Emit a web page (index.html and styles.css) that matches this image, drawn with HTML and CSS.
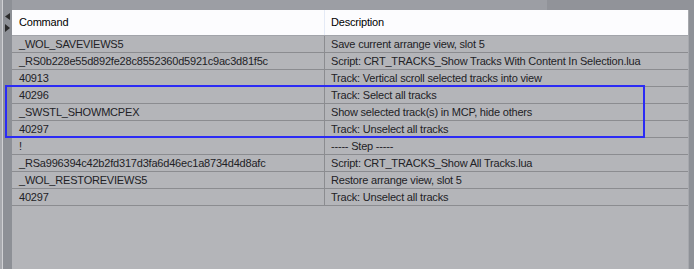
FILE: index.html
```html
<!DOCTYPE html>
<html lang="en">

<head>
    <meta charset="UTF-8">
    <title>Action List</title>
    <link rel="stylesheet" href="styles.css">
</head>

<body>
    <div id="window">
        <div class="side">
            <svg class="arrows" width="12" height="40" viewBox="0 0 12 40">
                <polygon points="10,13 10,20 5,16.5" fill="#2b2b2b" />
                <polygon points="5,24 5,32 10,28" fill="#2b2b2b" />
            </svg>
        </div>

        <div class="main">
            <div class="topbar">
                <div class="topbar-left"></div>
                <div class="topbar-right"></div>
            </div>

            <div class="content">
                <div class="list">
                    <div class="row head">
                        <div class="cell cmd">Command</div>
                        <div class="cell desc">Description</div>
                    </div>
                    <div class="row">
                        <div class="cell cmd">_WOL_SAVEVIEWS5</div>
                        <div class="cell desc">Save current arrange view, slot 5</div>
                    </div>
                    <div class="row">
                        <div class="cell cmd">_RS0b228e55d892fe28c8552360d5921c9ac3d81f5c</div>
                        <div class="cell desc">Script: CRT_TRACKS_Show Tracks With Content In Selection.lua</div>
                    </div>
                    <div class="row">
                        <div class="cell cmd">40913</div>
                        <div class="cell desc">Track: Vertical scroll selected tracks into view</div>
                    </div>
                    <div class="row">
                        <div class="cell cmd">40296</div>
                        <div class="cell desc">Track: Select all tracks</div>
                    </div>
                    <div class="row">
                        <div class="cell cmd">_SWSTL_SHOWMCPEX</div>
                        <div class="cell desc">Show selected track(s) in MCP, hide others</div>
                    </div>
                    <div class="row">
                        <div class="cell cmd">40297</div>
                        <div class="cell desc">Track: Unselect all tracks</div>
                    </div>
                    <div class="row">
                        <div class="cell cmd">!</div>
                        <div class="cell desc">----- Step -----</div>
                    </div>
                    <div class="row">
                        <div class="cell cmd">_RSa996394c42b2fd317d3fa6d46ec1a8734d4d8afc</div>
                        <div class="cell desc">Script: CRT_TRACKS_Show All Tracks.lua</div>
                    </div>
                    <div class="row">
                        <div class="cell cmd">_WOL_RESTOREVIEWS5</div>
                        <div class="cell desc">Restore arrange view, slot 5</div>
                    </div>
                    <div class="row">
                        <div class="cell cmd">40297</div>
                        <div class="cell desc">Track: Unselect all tracks</div>
                    </div>
                </div>
                <div class="edge"></div>
            </div>
        </div>

        <!-- highlight around the selected rows -->
        <div class="selection"></div>
    </div>
</body>

</html>
```

FILE: styles.css
```css
body {
    margin: 0;
    font-family: "Liberation Sans", Arial, sans-serif;
    font-size: 11px;
    letter-spacing: -0.2px;
}

#window {
    position: relative;
    display: flex;
    width: 694px;
    height: 269px;
    overflow: hidden;
}

.side {
    width: 12px;
    flex: none;
    background: linear-gradient(to right, #a8aaaf 0, #a8aaaf 2px, #d0d1d4 2px, #d0d1d4 3px, #8d9096 3px);
}

.arrows {
    display: block;
}

.main {
    flex: 1;
    display: flex;
    flex-direction: column;
}

.topbar {
    height: 10px;
    display: flex;
}

.topbar-left {
    flex: 1;
    background-color: #9c9ea4;
}

.topbar-right {
    width: 147px;
    background-color: #919399;
}

.content {
    flex: 1;
    display: flex;
}

.list {
    flex: 1;
    background-color: #b4b5b9;
}

.edge {
    width: 6px;
    background: linear-gradient(to right, #a6a8ad 0, #a6a8ad 1px, #8e9197 1px);
}

.row {
    display: flex;
    height: 17px;
    line-height: 16px;
    border-bottom: 1px solid #8b8c90;
    box-sizing: border-box;
    color: #222226;
}

.row.head {
    height: 26px;
    line-height: 25px;
    background-color: #fcfcfe;
    border-bottom: 1px solid #a2a4aa;
    color: #000;
}

.cell {
    white-space: nowrap;
    overflow: hidden;
}

.cmd {
    width: 313px;
    flex: none;
    padding-left: 7px;
    box-sizing: border-box;
    border-right: 1px solid #8b8c90;
}

.head .cmd {
    border-right-color: #e4eaf6;
}

.desc {
    flex: 1;
    padding-left: 6px;
}

.selection {
    position: absolute;
    left: 5px;
    top: 85px;
    width: 640px;
    height: 53px;
    border: 2px solid #2b2bf5;
    box-sizing: border-box;
}
```
